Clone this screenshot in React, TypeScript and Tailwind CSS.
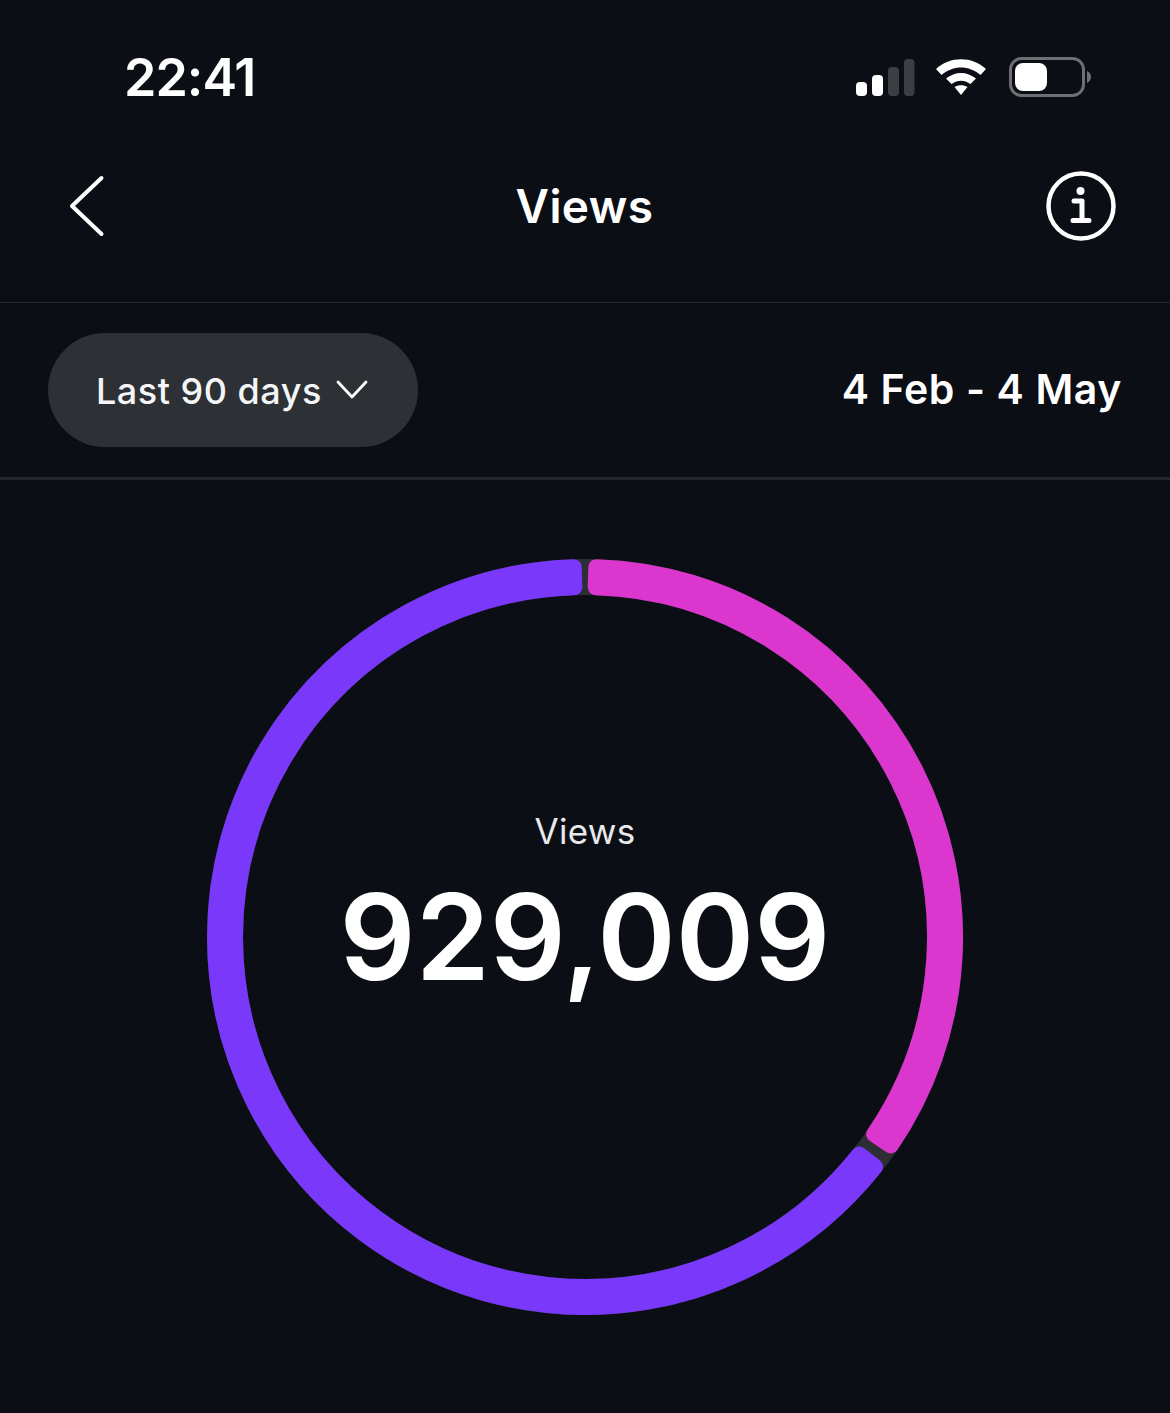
import React from 'react';

// annular segment with small rounded corners, angles in degrees clockwise from top
const segment = (from: number, to: number, outer = 370, inner = 350) => {
  const pt = (r: number, deg: number) => {
    const a = (deg * Math.PI) / 180;
    return `${(378 + r * Math.sin(a)).toFixed(2)} ${(378 - r * Math.cos(a)).toFixed(2)}`;
  };
  const large = to - from > 180 ? 1 : 0;
  return `M${pt(outer, from)} A${outer} ${outer} 0 ${large} 1 ${pt(outer, to)} L${pt(inner, to)} A${inner} ${inner} 0 ${large} 0 ${pt(inner, from)} Z`;
};

const StatusIcons = () => (
  <div className="flex items-center">
    <svg width="61" height="38" viewBox="0 0 61 38" className="mr-[20px]">
      <rect x="2" y="24" width="11" height="14" rx="4" fill="#ffffff" />
      <rect x="18" y="17" width="11" height="21" rx="4" fill="#ffffff" />
      <rect x="34" y="9" width="11" height="29" rx="4" fill="#3b3e42" />
      <rect x="50" y="1" width="10.500" height="37" rx="4" fill="#3b3e42" />
    </svg>
    <svg width="52" height="38" viewBox="0 0 52 38" className="mr-[22px]">
      <path d="M1 11 C15 -2 37 -2 51 11 L45.500 17 C34 7 18 7 6.500 17 Z" fill="#ffffff" />
      <path d="M11 20.500 C20 13 32 13 41 20.500 L35.500 26 C29.500 21.500 22.500 21.500 16.500 26 Z" fill="#ffffff" />
      <path d="M19.500 29 C23.500 26.500 28.500 26.500 32.500 29 L26 37 Z" fill="#ffffff" />
    </svg>
    <svg width="82" height="40" viewBox="0 0 82 40">
      <rect x="1.500" y="1.500" width="73" height="37" rx="11" fill="none" stroke="#6d6f72" strokeWidth="3" />
      <rect x="6" y="6" width="32" height="28" rx="8" fill="#ffffff" />
      <path d="M78 14 C81 15.500 82 18 82 20 C82 22 81 24.500 78 26 Z" fill="#6d6f72" />
    </svg>
  </div>
);

const App: React.FC = () => {
  return (
    <div className="h-[1413px] w-full overflow-hidden bg-[#0b0e14] font-['Inter',sans-serif] text-white">
      {/* Status bar */}
      <div className="flex h-[154px] items-center justify-between pl-[124px] pr-[79px]">
        <span className="pt-[2px] text-[52px] font-semibold leading-none tracking-[-1px]">22:41</span>
        <StatusIcons />
      </div>

      {/* Nav */}
      <div className="flex h-[149px] items-center justify-between border-b border-[#23262b] pb-[45px] pl-[68px] pr-[54px]">
        <svg width="38" height="64" viewBox="0 0 38 64">
          <path d="M33.500 4 L4 32 L33.500 60" fill="none" stroke="#ffffff" strokeWidth="4" strokeLinecap="round" strokeLinejoin="round" />
        </svg>
        <h1 className="ml-[17px] text-[46px] font-semibold leading-none tracking-[0.4px]">Views</h1>
        <svg width="70" height="70" viewBox="0 0 70 70">
          <circle cx="35" cy="35" r="32.500" fill="none" stroke="#ffffff" strokeWidth="4.500" />
          <circle cx="34.500" cy="20" r="4" fill="#ffffff" />
          <path d="M28 30 H36 V49 M27 49.500 H43" fill="none" stroke="#ffffff" strokeWidth="5" strokeLinecap="round" strokeLinejoin="round" />
        </svg>
      </div>

      {/* Filter row */}
      <div className="flex h-[177px] items-center justify-between border-b-[3px] border-[#23262b] pl-[48px] pr-[48px]">
        <button className="flex h-[114px] w-[370px] items-center rounded-full bg-[#2d3035] pl-[48px]">
          <span className="pt-[2px] text-[36px] font-medium leading-none tracking-[0.5px] text-[#f4f5f7]">Last 90 days</span>
          <svg width="32" height="20" viewBox="0 0 32 20" className="ml-[14px]">
            <path d="M2 2 L16 17 L30 2" fill="none" stroke="#ffffff" strokeWidth="2.800" strokeLinecap="round" strokeLinejoin="round" />
          </svg>
        </button>
        <span className="pb-[2px] text-[41px] font-semibold leading-none tracking-[0.6px]">4 Feb - 4 May</span>
      </div>

      {/* Donut */}
      <div className="flex justify-center pt-[79px]">
        <div className="relative h-[756px] w-[756px]">
          <svg width="756" height="756" viewBox="0 0 756 756" className="absolute inset-0">
            <circle cx="378" cy="378" r="360" fill="none" stroke="#2c2e33" strokeWidth="36" />
            <path d={segment(1.75, 124.3)} fill="#db37cf" stroke="#db37cf" strokeWidth="16" strokeLinejoin="round" />
            <path d={segment(128.4, 358.25)} fill="#7a38fb" stroke="#7a38fb" strokeWidth="16" strokeLinejoin="round" />
          </svg>
          <div className="absolute inset-0 flex flex-col items-center pt-[255px]">
            <span className="text-[35px] font-normal leading-none tracking-[0.3px] text-[#e8e9eb]">Views</span>
            <span className="mt-[29px] text-[119px] font-[560] leading-none">929,009</span>
          </div>
        </div>
      </div>
    </div>
  );
};

export default App;
